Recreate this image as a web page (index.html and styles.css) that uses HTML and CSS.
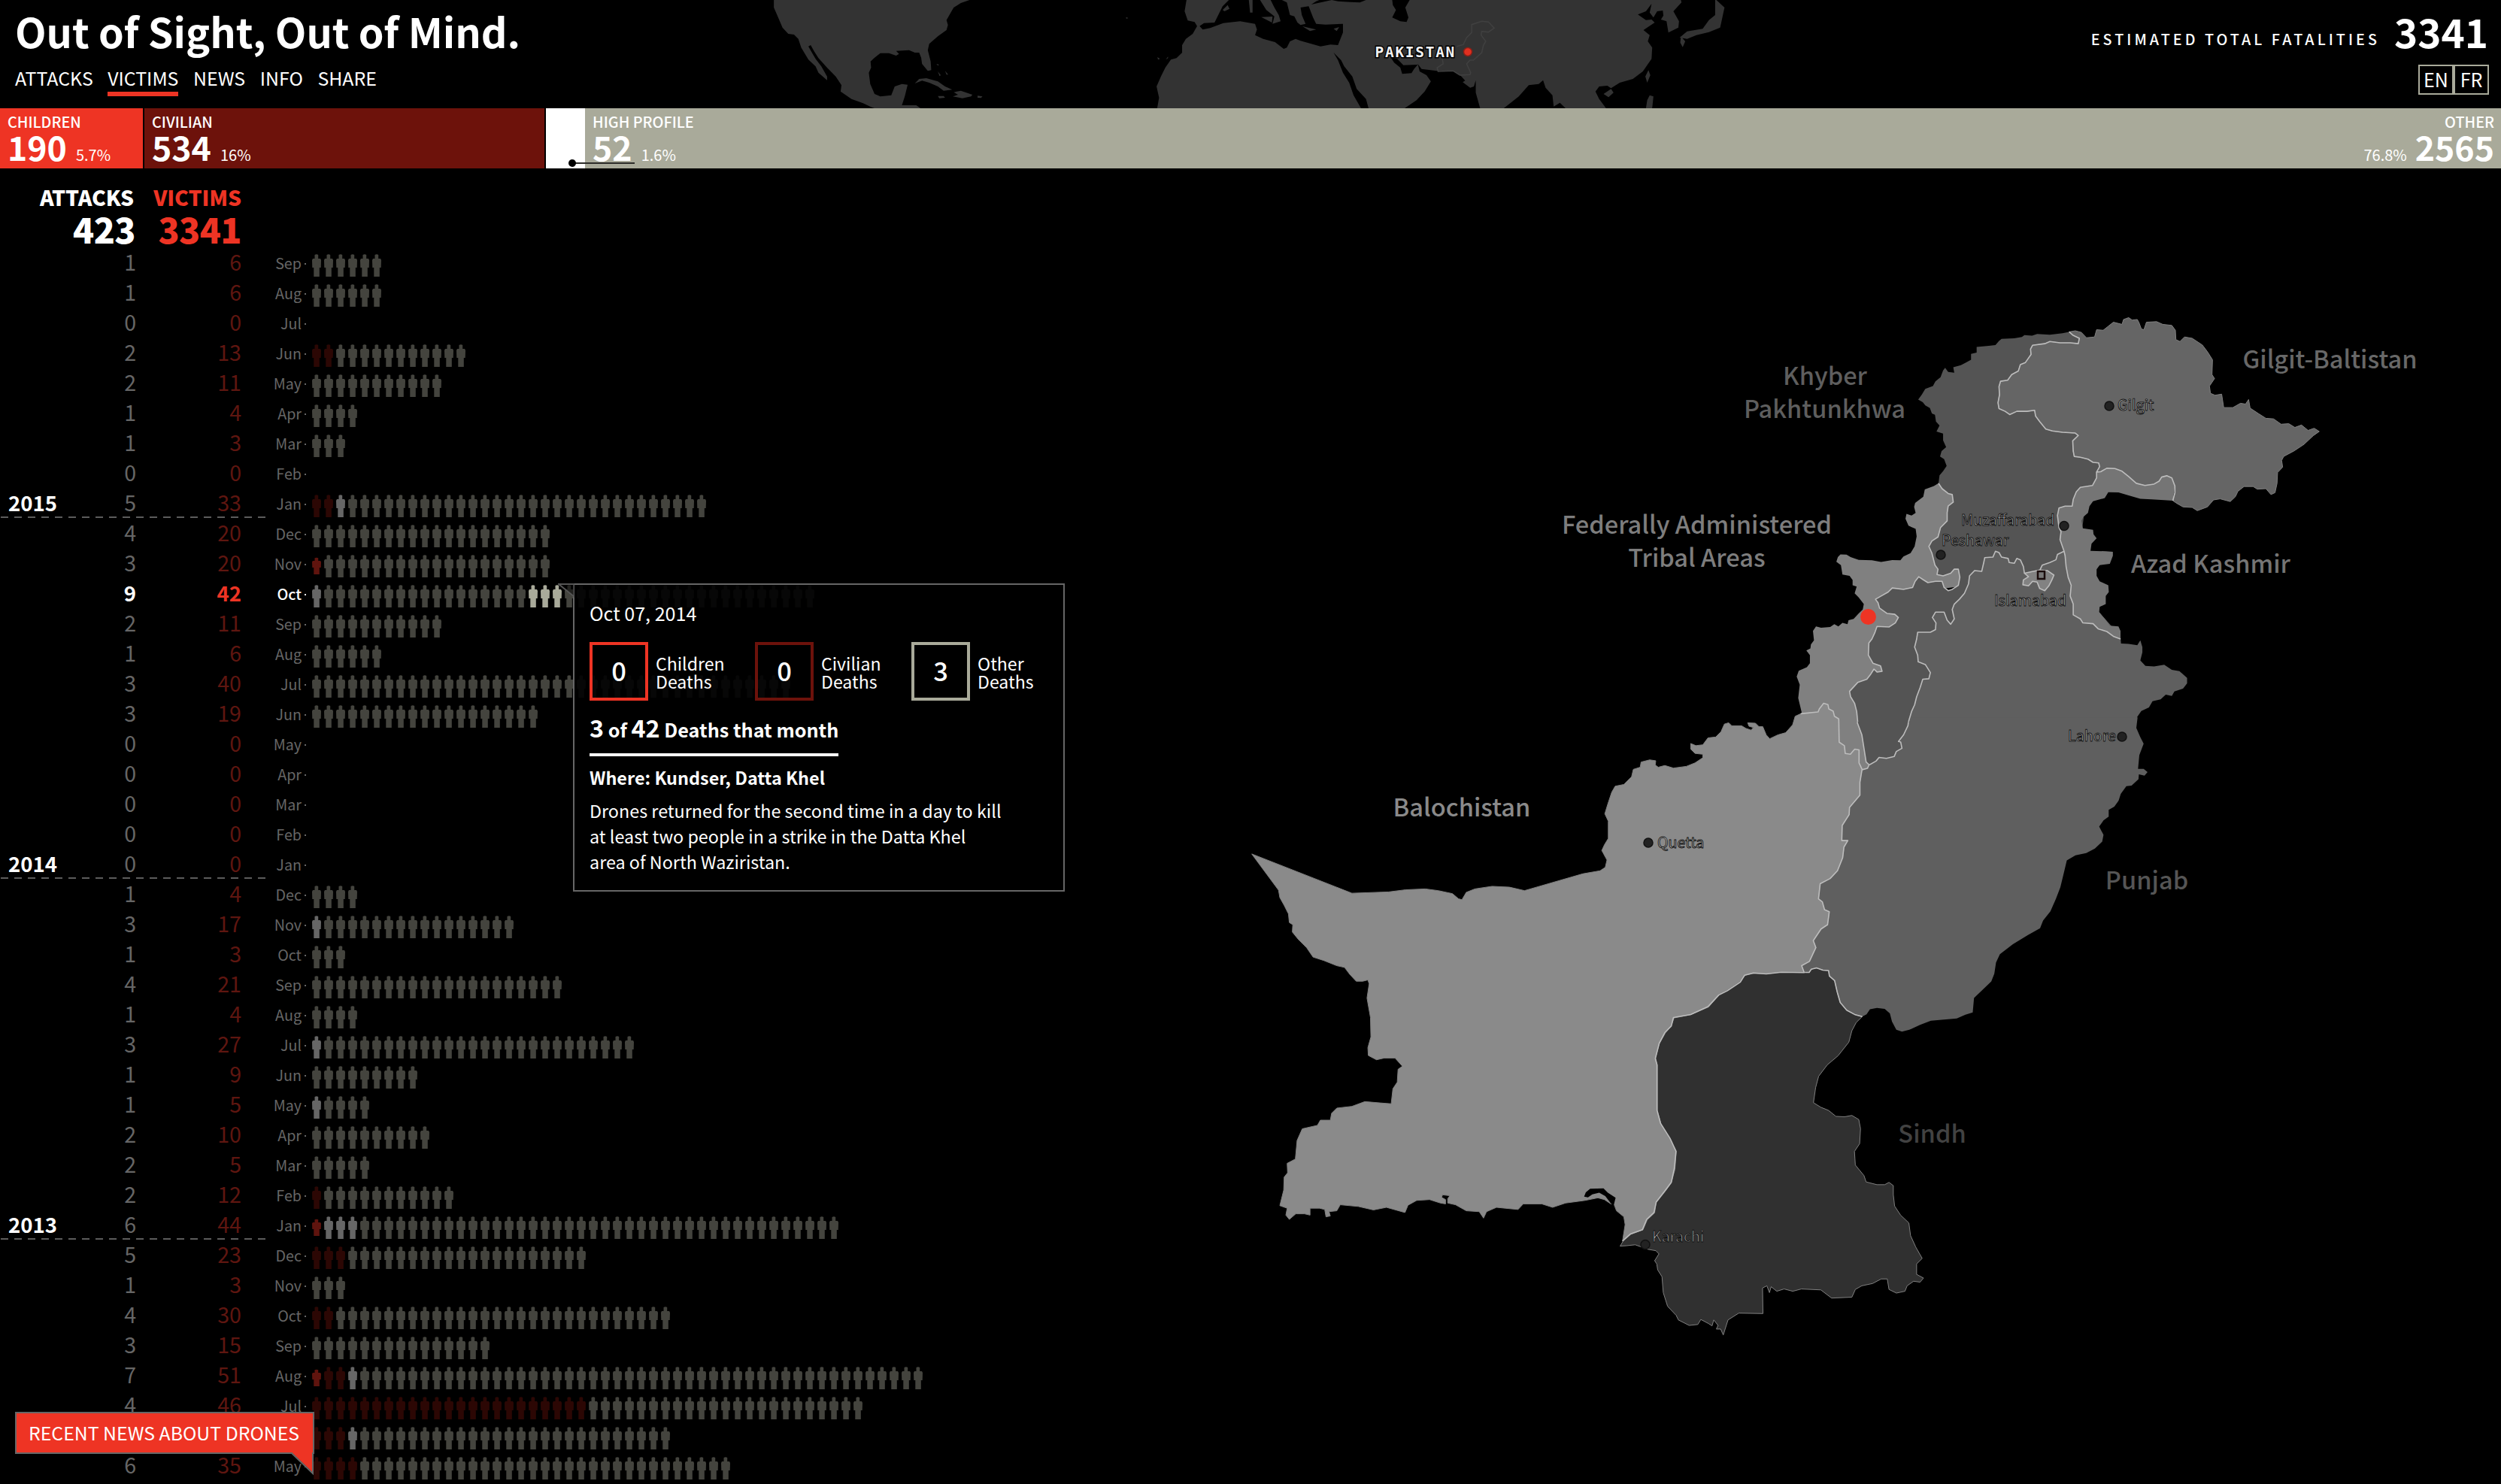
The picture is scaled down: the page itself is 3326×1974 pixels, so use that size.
FILE: index.html
```html
<!DOCTYPE html>
<html lang="en">
<head>
<meta charset="utf-8">
<title>Out of Sight, Out of Mind.</title>
<link rel="stylesheet" href="styles.css">
</head>
<body>
<header class="top">
  <div class="brand">
    <h1 class="title">Out of Sight, Out of Mind.</h1>
    <nav class="nav">
      <a class="nav-item">ATTACKS</a><a class="nav-item active">VICTIMS</a><a class="nav-item">NEWS</a><a class="nav-item">INFO</a><a class="nav-item">SHARE</a>
    </nav>
  </div>
  <svg class="world" viewBox="1000 0 1300 144" width="1300" height="144">
    <g transform="translate(1000 0) scale(.82908 .33333)">
      <g class="land">
        <path transform="translate(12.06 0) scale(.46153 1)" d="M50,0 50,30 65,70 80,110 100,135 120,138 135,155 145,190 170,238 195,265 205,290 235,320 235,305 215,265 195,235 185,215 170,185 178,180 190,205 205,232 235,270 265,305 285,340 282,365 320,395 360,412 390,428 400,432 560,432 545,420 495,420 505,385 515,338 495,335 470,345 458,380 420,385 400,375 385,335 380,290 388,270 386,245 400,230 420,212 450,212 475,222 485,215 475,203 520,200 540,210 555,210 562,230 565,255 585,283 597,280 595,245 585,200 590,175 620,145 650,120 655,100 650,80 660,60 675,30 700,12 730,0ZM540,333 555,315 580,312 620,325 645,345 670,358 640,362 620,345 590,330 565,322ZM675,368 700,362 740,378 735,385 705,392 672,385 690,378ZM620,383 640,383 645,390 625,392ZM758,382 775,385 770,391 758,390ZM620,285 630,300 626,304ZM645,283 656,298 650,298ZM615,255 624,258 620,262ZM1383,228 1392,235 1385,238ZM1412,238 1420,226 1420,232ZM1274,68 1282,72 1275,75Z"/>
        <path d="M697,0 694,45 699,82 710,88 714,104 707,135 696,155 690,180 690,210 681,232 672,238 663,270 656,305 649,345 653,390 650,432 1047,432 1066,400 1079,365 1089,325 1082,300 1071,285 1068,255 1074,275 1098,283 1125,283 1136,300 1144,322 1140,328 1152,350 1158,345 1161,320 1161,370 1168,432 1206,432 1230,385 1246,340 1262,335 1269,320 1273,350 1284,380 1286,425 1296,410 1305,432 1370,432 1359,395 1353,365 1359,345 1372,342 1378,352 1392,330 1413,315 1429,285 1443,235 1444,190 1437,165 1440,140 1430,120 1448,90 1443,78 1434,80 1421,58 1434,45 1443,15 1440,50 1446,70 1452,45 1461,42 1462,62 1458,78 1467,85 1470,130 1486,110 1487,85 1478,45 1491,10 1490,0ZM1547,0 1560,30 1553,110 1535,128 1515,140 1500,155 1488,150 1500,125 1525,115 1535,80 1545,60 1545,0ZM1490,145 1497,165 1493,188 1489,170ZM1438,280 1441,300 1436,330 1433,305ZM1440,380 1446,385 1444,432 1434,432 1436,400ZM1366,375 1378,355 1382,370 1374,388Z"/>
      </g>
      <path class="sea" d="M718,104 725,92 742,90 748,60 755,25 765,0 797,0 799,50 803,50 803,0 815,0 825,40 838,65 835,95 848,85 845,60 838,30 832,0 850,0 858,10 863,60 870,65 875,90 880,100 888,95 882,60 880,30 893,25 900,70 905,95 920,98 948,95 948,130 940,180 928,178 912,185 880,163 872,155 863,165 858,190 853,195 839,168 820,155 807,140 810,118 807,95 783,85 756,92 735,112 723,118ZM897,18 905,5 910,0 985,0 975,10 960,8 940,5 930,0ZM1027,0 1055,0 1048,30 1053,70 1050,88 1040,85 1027,70 1033,40 1028,20ZM933,210 940,240 948,290 958,330 965,380 977,432 989,432 985,395 970,355 963,305 950,265 945,240ZM1025,230 1035,235 1045,260 1068,258 1062,275 1058,292 1043,295 1040,270 1030,250Z"/>
      <path class="land" d="M755,40 763,20 766,35 758,45ZM817,68 835,66 834,90ZM883,105 905,118 895,124ZM933,115 942,108 938,124Z"/>
      <path class="outline" transform="translate(723.7 0) scale(.53847 1)" d="M712,230 715,255 697,270 700,285 745,283 765,300 795,298 797,290 785,255 795,240 805,240 830,210 835,180 842,165 828,140 830,125 850,128 867,112 850,88 830,85 800,98 800,130 785,150 775,178 755,185"/>
    </g>
    <text class="world-label" x="1828.5" y="76">PAKISTAN</text>
    <circle class="world-dot" cx="1952" cy="69" r="5.5"/>
  </svg>
  <div class="totals">
    <div class="total"><span class="total-label">ESTIMATED TOTAL FATALITIES</span><span class="total-num">3341</span></div>
    <div class="langs"><span class="lang">EN</span><span class="lang">FR</span></div>
  </div>
</header>

<section class="breakdown">
  <div class="part children"><div class="part-label">CHILDREN</div><div class="part-num">190<span class="pct">5.7%</span></div></div>
  <div class="part civilian"><div class="part-label">CIVILIAN</div><div class="part-num">534<span class="pct">16%</span></div></div>
  <div class="part profile"></div>
  <div class="part other">
    <div><div class="part-label">HIGH PROFILE</div><div class="part-num">52<span class="pct">1.6%</span></div></div>
    <div class="end"><div class="part-label">OTHER</div><div class="part-num"><span class="pct">76.8%</span>2565</div></div>
  </div>
  <span class="pointer"></span>
</section>

<main class="main">
  <section class="chart">
    <div class="heads">
      <div class="head attacks"><div class="head-label">ATTACKS</div><div class="head-num">423</div></div>
      <div class="head red"><div class="head-label">VICTIMS</div><div class="head-num">3341</div></div>
    </div>
    <div class="rows" id="rows"></div>
  </section>

  <svg class="map" viewBox="1640 224 1686 1750" width="1686" height="1750">
    <!-- Federally Administered Tribal Areas -->
    <g fill="#808080">
      <path transform="translate(2050 400) scale(.67602 .35714)" d="M781,680 772,690 754,703 751,730 735,753 733,768 736,790 728,800 718,794 716,812 722,838 736,850 738,878 734,915 726,940 712,953 706,967 690,966 668,973 650,967 624,965 608,955 600,946 588,945 583,955 580,972 589,985 592,1020 606,1025 612,1040 612,1060 620,1065 616,1090 624,1105 634,1130 632,1150 624,1165 614,1185 604,1190 602,1205 592,1200 584,1213 576,1205 568,1215 550,1218 540,1213 534,1230 536,1265 530,1280 529,1295 521,1303 528,1320 528,1350 522,1365 506,1378 502,1400 508,1430 505,1480 512,1535 512,1568 640,1568 680,1300 720,1180 720,1090 840,1060 830,700Z"/>
      <path transform="translate(2100 850) scale(.57398 .60587)" d="M520,160 660,160 680,276 656,295 600,290Z"/>
    </g>
    <!-- Khyber Pakhtunkhwa -->
    <g fill="#545454">
      <path transform="translate(2050 400) scale(.67602 .35714)" d="M781,680 783,650 790,635 797,615 792,590 784,580 787,560 796,545 790,520 790,495 777,487 783,465 776,450 774,425 768,420 764,400 755,390 750,378 741,368 748,350 755,328 770,318 775,300 785,285 790,260 794,250 800,265 812,268 810,248 825,240 835,230 845,220 845,198 856,193 856,172 880,168 893,165 900,150 905,142 930,140 945,135 950,128 965,130 975,124 1000,127 1025,121 1038,116 1070,145 1080,400 1130,660 1070,760 1050,1040 900,1040 840,1200 780,1300 780,1568 622,1568 620,1530 616,1500 608,1475 606,1455 622,1422 640,1410 648,1390 654,1372 660,1383 670,1380 667,1360 652,1350 643,1320 644,1275 650,1260 656,1235 660,1213 684,1215 696,1200 702,1180 695,1168 680,1165 665,1145 662,1125 657,1112 668,1100 682,1085 690,1070 712,1075 730,1068 735,1045 742,1028 750,1038 760,1050 775,1045 788,1045 792,1068 800,1080 808,1075 820,1060 823,1030 820,1000 812,1000 805,1015 790,1025 778,1020 780,1000 774,985 768,940 762,915 768,895 780,880 785,845 798,820 798,790 800,765 810,750 808,722 800,718 788,700Z"/>
      <path transform="translate(2100 850) scale(.57398 .60587)" d="M644,172 780,172 770,290 673,276 665,270 660,240 655,210 645,185Z"/>
    </g>
    <!-- Punjab -->
    <g fill="#5f5f5f">
      <path transform="translate(2050 400) scale(.67602 .35714)" d="M1028,933 1015,945 1012,965 1000,975 985,985 980,1005 950,1015 948,990 942,965 935,960 930,978 920,975 918,960 905,955 900,938 893,933 888,955 872,957 870,975 866,1008 852,1005 842,1025 840,1055 832,1090 822,1112 812,1130 808,1150 812,1185 805,1205 798,1190 792,1160 775,1160 769,1180 776,1200 775,1225 765,1235 740,1235 738,1260 734,1290 740,1320 741,1345 755,1355 765,1385 762,1408 750,1410 745,1440 738,1475 734,1505 728,1530 722,1568 1170,1568 1172,1550 1180,1528 1195,1515 1202,1492 1218,1485 1228,1467 1240,1472 1245,1455 1262,1445 1270,1425 1270,1405 1255,1380 1240,1375 1225,1356 1205,1362 1188,1360 1178,1340 1182,1310 1182,1290 1178,1265 1172,1283 1155,1278 1140,1277 1139,1250 1060,1080Z"/>
      <path transform="translate(2100 850) scale(.57398 .60587)" d="M765,172 1294,172 1291,195 1300,215 1308,230 1298,255 1295,285 1308,285 1317,292 1310,300 1297,297 1296,308 1280,322 1268,323 1255,340 1250,355 1240,368 1227,375 1227,390 1215,398 1205,412 1215,430 1212,445 1195,460 1175,470 1150,475 1130,486 1124,510 1115,545 1105,570 1092,598 1075,618 1068,635 1040,650 1005,670 975,692 966,710 962,735 955,752 935,770 915,788 912,820 895,825 875,833 815,838 790,847 765,858 748,862 735,858 725,840 720,822 708,812 690,810 674,813 666,824 656,829 580,829 480,760 500,500 560,350 600,287 656,287 668,284 673,276 688,268 695,260 712,262 730,258 735,247 748,240 745,226 740,225 752,210 762,190Z"/>
    </g>
    <g transform="translate(2050 400) scale(.67602 .35714)">
      <!-- Azad Kashmir, Gilgit-Baltistan, Islamabad -->
      <path fill="#757575" d="M1092,638 1112,615 1160,640 1195,670 1220,640 1246,640 1246,690 1242,745 1225,743 1200,740 1178,738 1155,725 1135,714 1115,713 1108,735 1085,747 1078,765 1075,790 1066,805 1062,820 1065,848 1085,853 1086,870 1092,885 1082,905 1080,932 1110,933 1124,935 1124,950 1118,980 1098,985 1092,1000 1092,1025 1098,1045 1115,1060 1116,1085 1110,1100 1110,1130 1098,1140 1097,1160 1108,1185 1118,1210 1135,1213 1139,1230 1139,1260 1125,1250 1112,1232 1095,1222 1085,1203 1065,1200 1060,1185 1046,1170 1046,1130 1040,1100 1042,1060 1036,1030 1032,990 1030,950 1028,933 1020,890 1022,860 1018,845 1015,800 1018,772 1030,765 1044,765 1046,740 1052,712 1060,695 1084,688 1092,660Z"/>
      <path class="edge" fill="#656565" d="M1038,116 1050,112 1062,118 1072,138 1088,135 1092,108 1105,110 1115,95 1125,80 1142,88 1145,70 1155,63 1162,72 1172,70 1175,80 1180,105 1185,108 1190,80 1210,78 1222,88 1240,92 1247,110 1248,145 1256,152 1265,135 1280,140 1300,165 1310,190 1320,220 1319,275 1324,290 1314,318 1316,345 1325,352 1338,348 1342,398 1360,398 1375,382 1385,385 1391,368 1394,400 1410,420 1425,438 1440,440 1455,460 1470,458 1482,472 1495,463 1508,483 1520,475 1530,487 1518,503 1500,535 1480,560 1460,580 1456,595 1458,620 1448,640 1447,680 1443,715 1435,722 1425,700 1408,702 1400,692 1382,692 1370,710 1365,730 1355,748 1335,738 1322,742 1310,768 1290,782 1280,770 1262,768 1250,755 1242,745 1246,715 1246,690 1240,660 1230,652 1220,657 1215,672 1205,683 1187,688 1170,680 1155,655 1142,635 1128,625 1112,624 1100,637 1092,638 1098,618 1096,604 1085,602 1075,590 1060,583 1048,580 1046,560 1045,522 1056,502 1050,493 1025,490 1005,485 992,478 980,450 972,430 970,408 955,412 935,412 921,424 912,412 900,402 898,380 901,350 900,320 903,300 917,296 925,275 938,262 942,238 952,230 963,200 962,180 966,166 990,160 1000,152 1020,157 1040,157 1056,160 1058,140 1045,128Z"/>
      <path class="border" fill="#828282" d="M980,1003 995,1005 1008,1022 1004,1040 998,1062 990,1080 980,1072 975,1048 966,1045 958,1062 947,1058 948,1040 958,1028 950,1015 962,1010Z"/>
      <g class="border" fill="none">
        <path d="M1038,116 1045,128 1058,140 1056,160 1040,157 1020,157 1000,152 990,160 966,166 962,180 963,200 952,230 942,238 938,262 925,275 917,296 903,300 900,320 901,350 898,380 900,402 912,412 921,424 935,412 955,412 970,408 972,430 980,450 992,478 1005,485 1025,490 1050,493 1056,502 1045,522 1046,560 1048,580 1060,583 1075,590 1085,602 1096,604 1098,618 1092,638 1100,637 1112,624 1128,625 1142,635 1155,655 1170,680 1187,688 1205,683 1215,672 1220,657 1230,652 1240,660 1246,690 1246,715 1242,745"/>
        <path d="M1139,1260 1125,1250 1112,1232 1095,1222 1085,1203 1065,1200 1060,1185 1046,1170 1046,1130 1040,1100 1042,1060 1036,1030 1032,990 1030,950 1028,933 1020,890 1022,860 1018,845 1015,800 1018,772 1030,765 1044,765 1046,740 1052,712 1060,695 1084,688 1092,660 1092,638"/>
        <path d="M1028,933 1015,945 1012,965 1000,975 985,985 980,1005M950,1015 948,990 942,965 935,960 930,978 920,975 918,960 905,955 900,938 893,933 888,955 872,957 870,975 866,1008 852,1005 842,1025 840,1055 832,1090 822,1112 812,1130 808,1150 812,1185 805,1205 798,1190 792,1160 775,1160 769,1180 776,1200 775,1225 765,1235 740,1235 738,1260 734,1290 740,1320 741,1345 755,1355 765,1385 762,1408 750,1410 745,1440 738,1475 734,1505 728,1530 722,1568"/>
        <path d="M781,680 788,700 800,718 808,722 810,750 800,765 798,790 798,820 785,845 780,880 768,895 762,915 768,940 774,985 780,1000 778,1020 790,1025 805,1015 812,1000 820,1000 823,1030 820,1060 808,1075 800,1080 792,1068 788,1045 775,1045 760,1050 750,1038 742,1028 735,1045 730,1068 712,1075 690,1070 682,1085 668,1100 657,1112 662,1125 665,1145 680,1165 695,1168 702,1180 696,1200 684,1215 660,1213 656,1235 650,1260 644,1275 643,1320 652,1350 667,1360 670,1380 660,1383 654,1372 648,1390 640,1410 622,1422 606,1455 608,1475 616,1500 620,1530 622,1568"/>
      </g>
    </g>
    <!-- Balochistan -->
    <g transform="translate(1640 900) scale(.57398)">
      <path class="edge" fill="#8a8a8a" d="M1315,86 1302,92 1296,112 1280,130 1262,135 1243,144 1235,135 1227,116 1218,116 1210,108 1192,107 1195,115 1205,118 1200,124 1188,120 1178,114 1155,114 1148,107 1138,110 1130,128 1118,140 1100,142 1088,158 1072,160 1060,155 1060,168 1070,178 1088,180 1088,188 1070,200 1050,208 1020,212 1000,206 985,210 978,205 979,195 965,193 945,198 943,210 927,215 923,232 905,250 885,254 877,268 868,295 861,318 869,335 869,375 860,390 854,403 866,425 862,442 850,450 810,457 675,496 640,488 600,486 560,492 540,500 530,517 522,515 508,503 475,496 445,492 400,494 360,499 275,502 43,411 105,495 108,512 118,530 128,550 130,570 138,575 137,592 150,608 170,628 185,650 210,658 240,670 258,674 270,690 285,706 300,706 312,703 315,712 310,745 318,790 319,835 312,860 313,878 332,888 350,884 375,884 392,903 382,910 380,940 370,955 366,990 340,988 305,985 275,996 240,1000 228,1012 225,1028 202,1028 195,1040 160,1048 148,1075 144,1118 125,1128 126,1150 118,1160 117,1190 108,1226 125,1232 122,1248 130,1258 145,1245 165,1245 178,1248 178,1232 200,1232 212,1235 215,1252 225,1250 222,1240 240,1238 248,1224 290,1228 325,1236 355,1230 398,1242 405,1225 425,1214 455,1212 480,1220 492,1222 492,1212 483,1207 485,1201 502,1203 497,1210 497,1220 515,1224 540,1238 570,1240 580,1255 587,1240 610,1230 630,1232 660,1235 672,1222 715,1222 740,1230 770,1220 815,1214 845,1208 860,1212 875,1222 882,1222 888,1238 905,1252 908,1270 902,1308 920,1292 948,1282 958,1258 975,1242 980,1218 1000,1192 1015,1172 1022,1140 1026,1100 1012,1070 990,1035 982,1005 982,900 978,885 987,850 1000,825 1015,810 1020,790 1060,783 1100,765 1125,738 1145,728 1175,708 1185,692 1205,687 1235,689 1270,685 1323,686 1317,670 1335,660 1350,628 1344,612 1362,585 1377,575 1381,545 1370,540 1365,522 1356,515 1360,480 1383,468 1400,450 1412,420 1415,395 1424,380 1410,380 1411,345 1427,320 1428,303 1452,275 1452,245 1457,215 1450,200 1450,170 1440,168 1430,180 1418,178 1416,160 1404,152 1403,98 1393,92 1390,80 1380,75 1378,65 1368,62 1358,75 1355,82Z"/>
      <path class="sea" d="M813,1205 817,1195 827,1187 858,1186 868,1196 886,1208 882,1224 876,1222 862,1204 848,1196 832,1200 822,1207Z"/>
    </g>
    <!-- Sindh -->
    <g transform="translate(2100 850) scale(.57398 .60587)">
      <path class="edge" fill="#303030" d="M523,732 533,732 538,725 550,722 565,727 578,728 580,740 592,750 598,775 605,798 620,815 640,825 656,829 642,842 632,860 625,885 600,915 575,935 555,960 548,985 543,1018 560,1028 578,1035 595,1048 615,1049 632,1046 648,1055 652,1075 650,1108 638,1125 640,1155 660,1178 665,1192 690,1198 708,1198 718,1193 728,1200 728,1220 731,1245 745,1265 764,1282 768,1310 780,1335 795,1360 782,1372 782,1395 798,1403 790,1412 775,1410 760,1420 755,1432 735,1436 718,1428 714,1405 700,1405 680,1415 655,1420 640,1428 632,1445 585,1447 560,1429 515,1427 495,1432 475,1427 458,1432 445,1422 441,1435 435,1420 425,1425 426,1481 370,1480 345,1495 334,1528 328,1515 318,1515 322,1507 312,1495 308,1508 300,1503 282,1494 275,1505 255,1507 230,1495 225,1485 205,1465 195,1435 192,1400 182,1385 180,1372 175,1365 185,1350 178,1343 160,1340 130,1330 110,1332 95,1333 102,1322 120,1307 148,1297 158,1275 175,1260 178,1238 200,1212 213,1195 222,1165 225,1125 212,1100 190,1065 181,1035 181,935 177,920 186,888 200,865 213,850 220,832 258,825 300,808 325,780 345,770 373,752 385,738 405,734 435,735 470,731Z"/>
      <g class="border" fill="none">
        <path d="M523,732 533,732 538,725 550,722 565,727 578,728 580,740 592,750 598,775 605,798 620,815 640,825 656,829"/>
        <path d="M645,182 645,185 655,210 660,240 665,270 672,276 668,284 656,287M673,276 688,268 695,260 712,262 730,258 735,247 748,240 745,226 740,225 752,210 762,190 763,182"/>
      </g>
    </g>
    <g transform="translate(1640 900) scale(.57398)">
      <path class="border" fill="none" d="M902,1308 920,1292 948,1282 958,1258 975,1242 980,1218 1000,1192 1015,1172 1022,1140 1026,1100 1012,1070 990,1035 982,1005 982,900 978,885 987,850 1000,825 1015,810 1020,790 1060,783 1100,765 1125,738 1145,728 1175,708 1185,692 1205,687 1235,689 1270,685 1323,686 1317,670 1335,660 1350,628 1344,612 1362,585 1377,575 1381,545 1370,540 1365,522 1356,515 1360,480 1383,468 1400,450 1412,420 1415,395 1424,380 1410,380 1411,345 1427,320 1428,303 1452,275 1452,245 1457,215 1450,200 1450,170 1440,168 1430,180 1418,178 1416,160 1404,152 1403,98 1393,92 1390,80 1380,75 1378,65 1368,62 1358,75 1355,82 1315,86"/>
    </g>

    <g class="province">
      <text x="3098.5" y="490" fill="#686868">Gilgit-Baltistan</text>
      <text x="2427" y="512" fill="#5e5e5e">Khyber</text>
      <text x="2426.5" y="556" fill="#5e5e5e">Pakhtunkhwa</text>
      <text x="2256.5" y="710" fill="#7d7d7d">Federally Administered</text>
      <text x="2256.5" y="754" fill="#7d7d7d">Tribal Areas</text>
      <text x="2940" y="762" fill="#757575">Azad Kashmir</text>
      <text x="1944" y="1086" fill="#8a8a8a">Balochistan</text>
      <text x="2855" y="1182.5" fill="#555">Punjab</text>
      <text x="2569.5" y="1520" fill="#424242">Sindh</text>
    </g>
    <g class="city-dot">
      <circle cx="2805" cy="540" r="6"/><circle cx="2745" cy="699.5" r="6"/><circle cx="2581" cy="738" r="6"/><circle cx="2192" cy="1121" r="6"/><circle cx="2822" cy="980" r="6"/><circle cx="2188" cy="1655.5" r="6"/>
    </g>
    <rect class="capital" x="2710" y="760" width="9" height="10"/>
    <g class="city">
      <text x="2816" y="546">Gilgit</text>
      <text x="2608" y="699">Muzaffarabad</text>
      <text x="2582" y="725.5">Peshawar</text>
      <text x="2652" y="806">Islamabad</text>
      <text x="2204" y="1128">Quetta</text>
      <text x="2750" y="985.5">Lahore</text>
      <text x="2197" y="1651.5">Karachi</text>
    </g>
    <circle class="strike" cx="2484.5" cy="820.5" r="10.5"/>
  </svg>
</main>

<aside class="tip">
  <svg class="tip-tail" width="22" height="20" viewBox="0 0 22 20"><path d="M1 1H22V18Z"/></svg>
  <div class="tip-date">Oct 07, 2014</div>
  <div class="tip-counts">
    <div class="count"><span class="count-box c-child">0</span><span class="count-label">Children<br>Deaths</span></div>
    <div class="count"><span class="count-box c-civ">0</span><span class="count-label">Civilian<br>Deaths</span></div>
    <div class="count"><span class="count-box c-other">3</span><span class="count-label">Other<br>Deaths</span></div>
  </div>
  <div class="tip-sum"><span class="big">3</span> of <span class="big">42</span> Deaths that month</div>
  <div class="tip-where">Where: Kundser, Datta Khel</div>
  <p class="tip-text">Drones returned for the second time in a day to kill<br>at least two people in a strike in the Datta Khel<br>area of North Waziristan.</p>
</aside>

<div class="news">RECENT NEWS ABOUT DRONES
  <svg class="news-tail" width="32" height="32" viewBox="0 0 32 32"><path class="news-fill" d="M2 0H31V28Z"/><path class="news-line" d="M0 1H2L30 28V0"/></svg>
</div>
<script src="script.js"></script>
</body>
</html>
```
FILE: styles.css
```css
* { box-sizing: border-box; }
body { margin: 0; width: 3326px; height: 1974px; overflow: hidden; position: relative; background: #000; color: #fff; font-family: "Noto Sans CJK SC", "Noto Sans", sans-serif; white-space: nowrap; }
h1, p { margin: 0; }

/* header */
.top { display: grid; grid-template-columns: 1000px 1300px 1fr; height: 144px; }
.brand { padding-left: 20px; }
.title { font-size: 54px; line-height: 81px; font-weight: 700; height: 80px; }
.nav { display: flex; gap: 19.5px; padding-top: 2px; }
.nav-item { box-sizing: content-box; font-size: 24.9px; line-height: 42px; height: 40px; border-bottom: 6px solid transparent; }
.nav-item.active { border-color: #ee3424; }
.world { display: block; }
.land { fill: #333; }
.sea { fill: #000; }
.outline { fill: none; stroke: #404040; stroke-width: 1.5; vector-effect: non-scaling-stroke; }
.world-label { font: 700 19.5px "DejaVu Sans Mono", monospace; letter-spacing: 1.7px; fill: #f2f2f2; stroke: #000; stroke-width: 3px; paint-order: stroke; }
.world-dot { fill: #e03020; stroke: #8a2018; stroke-width: 1.5; }
.totals { padding-right: 16px; }
.total { display: flex; justify-content: flex-end; padding-right: 1px; height: 80px; }
.total-label { margin: 20px 19px 0 0; font-size: 19.7px; line-height: 63px; font-weight: 500; letter-spacing: 4.05px; }
.total-num { font-size: 53px; line-height: 82px; font-weight: 700; }
.langs { display: flex; justify-content: flex-end; padding-top: 6px; }
.lang { width: 47px; height: 40px; border: 2px solid #a9aa9a; font-size: 25px; line-height: 35px; text-align: center; }

/* breakdown bar */
.breakdown { position: relative; display: flex; gap: 2px; height: 80px; }
.part { padding-left: 10px; }
.children { width: 190px; background: #ee3424; }
.civilian { width: 532px; background: #6d120b; }
.profile { width: 52px; background: #fff; }
.other { flex: 1; margin-left: -2px; padding-right: 9px; background: #a9aa9a; display: flex; justify-content: space-between; }
.end { text-align: right; }
.part-label { font-size: 19.8px; line-height: 35px; font-weight: 500; }
.part-num { font-size: 44.6px; line-height: 32px; font-weight: 700; }
.pct { font-size: 20px; line-height: 1px; font-weight: 400; margin: 0 0 0 12px; }
.end .pct { margin: 0 11px 0 0; }
.pointer { position: absolute; left: 760px; top: 72px; width: 84px; height: 2px; background: #2c2c28; }
.pointer::before { content: ""; position: absolute; left: -4px; top: -4px; width: 10px; height: 10px; border-radius: 50%; background: #000; }

/* monthly chart */
.main { display: grid; grid-template-columns: 1640px 1686px; height: 1750px; overflow: hidden; }
.heads { display: grid; grid-template-columns: 180px 141px; padding-top: 16px; height: 106px; text-align: right; }
.attacks .head-label { padding-right: 2px; }
.head-label { font-size: 28.3px; line-height: 44px; font-weight: 900; letter-spacing: -.1px; }
.head-num { font-size: 46.4px; line-height: 40px; font-weight: 900; letter-spacing: -.6px; }
.red { color: #ee3424; }
.row { position: relative; display: grid; grid-template-columns: 100px 81px 140px 80px 14px 1fr; height: 40px; align-items: start; text-align: right; color: #666; }
.year { padding-left: 11px; text-align: left; font-size: 27.6px; line-height: 36px; font-weight: 700; color: #fff; }
.num { font-size: 28.6px; line-height: 35px; }
.num.vic { color: #5f1610; }
.month { font-size: 19.7px; line-height: 39px; }
.tick { width: 2px; height: 2px; margin: 20px 0 0 4px; background: #666; }
.row.on .num, .row.on .month { color: #fff; font-weight: 700; }
.row.on .month { font-weight: 500; }
.row.on .num { font-size: 27.6px; line-height: 36px; }
.row.on .num.vic { color: #ee3424; }
.row.on .tick { background: #fff; }
.row.january::after { content: ""; position: absolute; left: 1px; top: 37px; width: 352px; height: 2px; background: repeating-linear-gradient(90deg, #5c5c5c 0 10px, transparent 10px 18px); }
.people { display: flex; height: 40px; }
.seg { width: calc(var(--n) * 16px); height: 40px; -webkit-mask: url("data:image/svg+xml,%3Csvg xmlns='http://www.w3.org/2000/svg' width='16' height='40'%3E%3Cpath d='M3.5 9Q6 7.5 8.2 9V14H11L12 16 11.7 26H9.8V38H2.3V26H.3L0 16 1 14H3.5Z'/%3E%3C/svg%3E") 0 0 / 16px 40px repeat-x; mask: url("data:image/svg+xml,%3Csvg xmlns='http://www.w3.org/2000/svg' width='16' height='40'%3E%3Cpath d='M3.5 9Q6 7.5 8.2 9V14H11L12 16 11.7 26H9.8V38H2.3V26H.3L0 16 1 14H3.5Z'/%3E%3C/svg%3E") 0 0 / 16px 40px repeat-x; }
.seg.child { background: #5f140e; transform: translateY(5.5px) scaleY(.75); transform-origin: 0 0; }
.seg.civ { background: #2c0704; }
.seg.high { background: #666; }
.seg.oth { background: #44443e; }
.seg.hit { background: #a9aa9a; }

/* map */
.map { display: block; }
.edge { stroke: #808080; stroke-width: 1; vector-effect: non-scaling-stroke; }
.border, .border path { stroke: #bdbdbd; stroke-width: 1.6; stroke-linejoin: round; vector-effect: non-scaling-stroke; }
.province { font-size: 32.6px; font-weight: 500; text-anchor: middle; }
.city { font-size: 19.7px; fill: #b8b8b8; stroke: #111; stroke-width: .9; }
.city-dot { fill: #222; stroke: #111; stroke-width: 1.5; }
.capital { fill: #777; stroke: #1a0c0c; stroke-width: 2.5; }
.strike { fill: #ee3424; }

/* tooltip */
.tip { position: absolute; left: 762px; top: 776px; width: 654px; height: 410px; border: 2px solid #666; background: rgba(0, 0, 0, .89); padding: 14px 0 0 20px; }
.tip-tail { position: absolute; left: -22px; top: -2px; fill: rgba(0, 0, 0, .5); stroke: #555; stroke-width: 2; }
.tip-date { font-size: 25.1px; line-height: 47px; }
.tip-counts { display: grid; grid-template-columns: 220px 208px auto; margin-top: 15px; height: 78px; }
.count { display: flex; }
.count-box { width: 78px; height: 78px; border: 4px solid; font-size: 34.5px; line-height: 66px; font-weight: 500; text-align: center; }
.c-child { border-color: #ee3424; }
.c-civ { border-color: #6d120b; }
.c-other { border-color: #a9aa9a; }
.count-label { margin: 16px 0 0 10px; font-size: 23.1px; line-height: 24px; }
.tip-sum { display: inline-block; margin-top: 8px; padding-top: 2px; font-size: 25.2px; line-height: 56px; height: 66px; border-bottom: 4px solid #fff; font-weight: 700; }
.tip-sum .big { font-size: 32.3px; line-height: 1px; }
.tip-where { margin-top: 8px; font-size: 23.4px; line-height: 40px; font-weight: 700; }
.tip-text { margin-top: 7px; font-size: 23.35px; line-height: 34px; }

/* news button */
.news { position: absolute; left: 20px; top: 1878px; width: 398px; height: 56px; border: 2px solid #666; background: #ee3424; padding-left: 16px; font-size: 24.8px; line-height: 50px; }
.news-tail { position: absolute; right: -2px; top: 52px; }
.news-fill { fill: #ee3424; }
.news-line { fill: none; stroke: #666; stroke-width: 2; }
```
FILE: script.js
```js
// [attacks, victims, month, people by kind, year]
const months = [
  [1, 6, "Sep"], [1, 6, "Aug"], [0, 0, "Jul"], [2, 13, "Jun", { civ: 2, oth: 11 }],
  [2, 11, "May"], [1, 4, "Apr"], [1, 3, "Mar"], [0, 0, "Feb"],
  [5, 33, "Jan", { civ: 2, high: 1, oth: 30 }, 2015],
  [4, 20, "Dec"], [3, 20, "Nov", { child: 1, oth: 19 }],
  [9, 42, "Oct", { high: 1, oth: 17, hit: 3, oth2: 21 }],
  [2, 11, "Sep"], [1, 6, "Aug"], [3, 40, "Jul"], [3, 19, "Jun"],
  [0, 0, "May"], [0, 0, "Apr"], [0, 0, "Mar"], [0, 0, "Feb"], [0, 0, "Jan", {}, 2014],
  [1, 4, "Dec"], [3, 17, "Nov", { high: 1, oth: 16 }], [1, 3, "Oct"], [4, 21, "Sep"],
  [1, 4, "Aug"], [3, 27, "Jul", { high: 1, oth: 26 }], [1, 9, "Jun"],
  [1, 5, "May", { high: 1, oth: 4 }], [2, 10, "Apr"], [2, 5, "Mar"],
  [2, 12, "Feb", { civ: 1, oth: 11 }], [6, 44, "Jan", { child: 1, high: 3, oth: 40 }, 2013],
  [5, 23, "Dec", { civ: 3, oth: 20 }], [1, 3, "Nov"], [4, 30, "Oct", { civ: 2, oth: 28 }],
  [3, 15, "Sep"], [7, 51, "Aug", { child: 1, civ: 2, high: 1, oth: 47 }],
  [4, 46, "Jul", { civ: 23, oth: 23 }], ["", "", "", { civ: 3, high: 1, oth: 26 }],
  [6, 35, "May", { civ: 4, oth: 31 }]
];
document.getElementById("rows").innerHTML = months.map(([attacks, victims, month, kinds, year]) => {
  const people = Object.entries(kinds || { oth: victims })
    .map(([kind, n]) => `<i class="seg ${kind.replace("2", "")}" style="--n:${n}"></i>`).join("");
  const state = (year ? " january" : "") + (victims === 42 ? " on" : "");
  return `<div class="row${state}"><span class="year">${year || ""}</span><span class="num">${attacks}</span>` +
    `<span class="num vic">${victims}</span><span class="month">${month}</span><span class="tick"></span><span class="people">${people}</span></div>`;
}).join("");
```
